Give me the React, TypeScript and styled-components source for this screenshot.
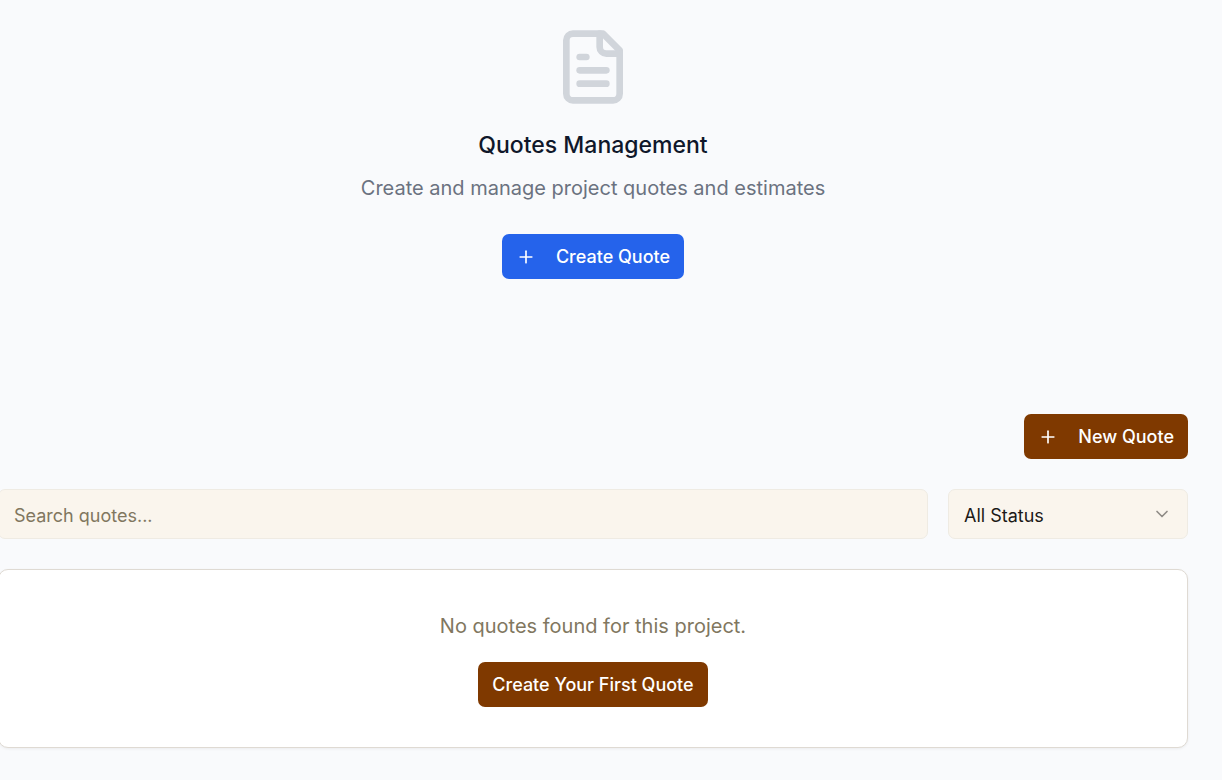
import React from "react";
import styled, { createGlobalStyle } from "styled-components";
import { ChevronDown, Plus } from "lucide-react";

const GlobalStyle = createGlobalStyle`
  *, *::before, *::after { box-sizing: border-box; }
  body {
    margin: 0;
    background: #f9fafc;
    color: #1c1917;
    font-family: Inter, "Liberation Sans", sans-serif;
    overflow-x: hidden;
  }
  button, input, select { font: inherit; }
`;

const Page = styled.main`
  margin: 0 34px 0 -2px;
  padding-bottom: 32px;
`;

const Intro = styled.section`
  display: flex;
  flex-direction: column;
  align-items: center;
  padding: 27px 0 135px;
  text-align: center;
`;

const FileIcon = styled.svg`
  width: 80px;
  height: 80px;
  color: #d1d5db;
`;

const Title = styled.h1`
  margin: 20px 0 10px;
  color: #0f172a;
  font-size: 23px;
  font-weight: 500;
  line-height: 36px;
`;

const Description = styled.p`
  margin: 0 0 31px;
  color: #6b7280;
  font-size: 20px;
  line-height: 30px;
`;

const Button = styled.button<{ $tone: "blue" | "brown" }>`
  display: inline-flex;
  align-items: center;
  justify-content: center;
  gap: 20px;
  height: 45px;
  padding: 0 14px;
  border: 0;
  border-radius: 7px;
  background: ${(p) => (p.$tone === "blue" ? "#2563eb" : "#7f3900")};
  color: #fff;
  font-size: 18px;
  font-weight: 500;
  line-height: 25px;
  white-space: nowrap;
`;

const Actions = styled.div`
  display: flex;
  justify-content: flex-end;
  margin-bottom: 30px;
`;

const Filters = styled.form`
  display: flex;
  gap: 20px;
  margin-bottom: 30px;
`;

const SearchInput = styled.input`
  flex: 1;
  min-width: 0;
  height: 50px;
  padding: 2px 15px 0;
  border: 1px solid #efebe3;
  border-radius: 7px;
  background: #faf5ed;
  font-size: 18px;
  &::placeholder { color: #81775f; opacity: 1; }
`;

const SelectBox = styled.div`
  display: grid;
  align-items: center;
  width: 240px;
  & > * { grid-area: 1 / 1; }
  & > svg {
    justify-self: end;
    margin-right: 16px;
    color: #8f8b86;
    pointer-events: none;
  }
`;

const Select = styled.select`
  width: 100%;
  height: 50px;
  padding: 2px 40px 0 15px;
  border: 1px solid #efebe3;
  border-radius: 7px;
  background: #faf5ed;
  color: #1c1917;
  font-size: 18px;
  appearance: none;
`;

const Card = styled.section`
  display: flex;
  flex-direction: column;
  align-items: center;
  gap: 21px;
  padding: 41px 20px 40px;
  border: 1px solid #dfdad3;
  border-radius: 10px;
  background: #fff;
  box-shadow: 0 1px 3px rgba(0, 0, 0, 0.06);
`;

const EmptyText = styled.p`
  margin: 0;
  color: #81775f;
  font-size: 20px;
  line-height: 30px;
`;

export default function App() {
  return (
    <>
      <GlobalStyle />
      <Page>
        <Intro>
          <FileIcon
            viewBox="0 0 24 24"
            fill="none"
            stroke="currentColor"
            strokeWidth="2"
            strokeLinecap="round"
            strokeLinejoin="round"
            aria-hidden="true"
          >
            <path d="M15 2H6a2 2 0 0 0-2 2v16a2 2 0 0 0 2 2h12a2 2 0 0 0 2-2V7Z" />
            <path d="M14 2v4a2 2 0 0 0 2 2h4" />
            <path d="M10 9H8" />
            <path d="M16 13H8" />
            <path d="M16 17H8" />
          </FileIcon>
          <Title>Quotes Management</Title>
          <Description>Create and manage project quotes and estimates</Description>
          <Button type="button" $tone="blue">
            <Plus size={20} strokeWidth={2} aria-hidden="true" />
            Create Quote
          </Button>
        </Intro>
        <Actions>
          <Button type="button" $tone="brown">
            <Plus size={20} strokeWidth={2} aria-hidden="true" />
            New Quote
          </Button>
        </Actions>
        <Filters onSubmit={(e) => e.preventDefault()}>
          <SearchInput type="text" aria-label="Search quotes" placeholder="Search quotes..." />
          <SelectBox>
            <Select aria-label="Status" defaultValue="all">
              <option value="all">All Status</option>
              <option value="draft">Draft</option>
              <option value="sent">Sent</option>
            </Select>
            <ChevronDown size={20} strokeWidth={2} aria-hidden="true" />
          </SelectBox>
        </Filters>
        <Card>
          <EmptyText>No quotes found for this project.</EmptyText>
          <Button type="button" $tone="brown">Create Your First Quote</Button>
        </Card>
      </Page>
    </>
  );
}
